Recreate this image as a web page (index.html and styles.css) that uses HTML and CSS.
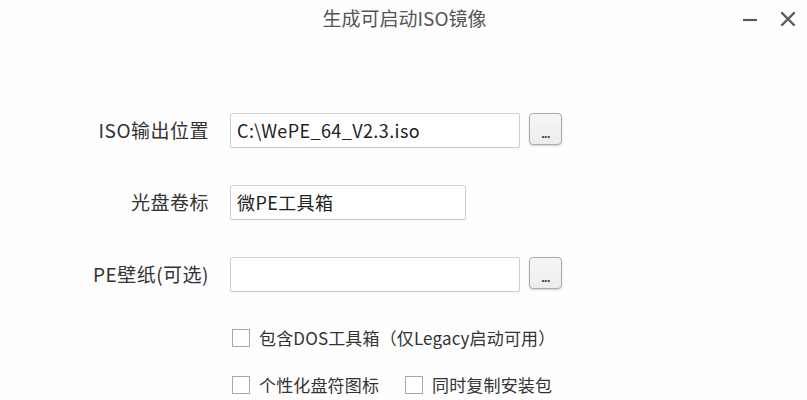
FILE: index.html
```html
<!DOCTYPE html>
<html lang="zh-CN">
<head>
<meta charset="utf-8">
<title>生成可启动ISO镜像</title>
<link rel="stylesheet" href="styles.css">
</head>
<body>
<div class="window">
  <header class="titlebar">
    <div class="title">生成可启动ISO镜像</div>
    <div class="controls">
      <svg class="ctl min" width="16" height="16" viewBox="0 0 16 16"><line x1="1" y1="9" x2="15" y2="9" stroke="#5a5a5a" stroke-width="2.2"/></svg>
      <svg class="ctl close" width="16" height="16" viewBox="0 0 16 16"><path d="M2 2 L14 14 M14 2 L2 14" stroke="#5a5a5a" stroke-width="2.4" stroke-linecap="round"/></svg>
    </div>
  </header>
  <main class="form">
    <div class="row">
      <label class="label">ISO输出位置</label>
      <div class="input wide">C:\WePE_64_V2.3.iso</div>
      <button class="browse">...</button>
    </div>
    <div class="row">
      <label class="label">光盘卷标</label>
      <div class="input narrow">微PE工具箱</div>
    </div>
    <div class="row">
      <label class="label">PE壁纸(可选)</label>
      <div class="input wide"></div>
      <button class="browse">...</button>
    </div>
    <div class="checks">
      <div class="check-row">
        <span class="check"><span class="box"></span><span class="ctext">包含DOS工具箱（仅Legacy启动可用）</span></span>
      </div>
      <div class="check-row">
        <span class="check"><span class="box"></span><span class="ctext">个性化盘符图标</span></span>
        <span class="check second"><span class="box"></span><span class="ctext">同时复制安装包</span></span>
      </div>
    </div>
  </main>
</div>
</body>
</html>
```
FILE: styles.css
```css
html, body {
  margin: 0;
  padding: 0;
  background: #ffffff;
}
body {
  font-family: "Noto Sans CJK SC", "Noto Sans", sans-serif;
  color: #333333;
  width: 807px;
  height: 400px;
  overflow: hidden;
}
.window {
  position: relative;
  width: 807px;
  height: 400px;
  background: #fefefe;
}
.titlebar {
  height: 38px;
  display: flex;
  align-items: center;
  justify-content: center;
}
.title {
  font-size: 19px;
  line-height: 22px;
  color: #555555;
  margin-top: -2px;
  margin-left: 2px;
}
.controls {
  position: absolute;
  top: 11px;
  right: 11px;
  display: flex;
  gap: 22px;
}
.ctl {
  display: block;
}
.form {
  display: flex;
  flex-direction: column;
  padding-top: 75px;
  padding-left: 89px;
}
.row {
  display: flex;
  align-items: center;
  height: 34px;
  margin-bottom: 38px;
}
.label {
  width: 120px;
  margin-right: 21px;
  text-align: right;
  font-size: 19px;
  line-height: 22px;
  letter-spacing: 0.5px;
  color: #333333;
  white-space: nowrap;
}
.input {
  box-sizing: border-box;
  height: 35px;
  border: 1px solid #cfcfcf;
  border-radius: 2px;
  background: #ffffff;
  box-shadow: 0 1px 1px rgba(0,0,0,0.06);
  padding-left: 6px;
  font-size: 18px;
  line-height: 32px;
  letter-spacing: 0.4px;
  color: #222222;
  white-space: nowrap;
}
.wide { width: 290px; }
.narrow { width: 236px; }
.browse {
  box-sizing: border-box;
  width: 33px;
  height: 32px;
  margin-left: 9px;
  margin-top: -2px;
  border: 1px solid #a9a9a9;
  border-radius: 4px;
  background: linear-gradient(#f6f6f6, #ececec);
  box-shadow: 0 1px 2px rgba(0,0,0,0.18);
  font-family: "Liberation Sans", sans-serif;
  font-weight: bold;
  font-size: 12px;
  color: #333333;
  padding: 10px 0 0 0;
  line-height: 12px;
  letter-spacing: -0.5px;
}
.checks {
  display: flex;
  flex-direction: column;
  margin-top: -1px;
  padding-left: 143px;
  gap: 27px;
}
.check-row {
  display: flex;
  align-items: center;
  height: 20px;
}
.check {
  display: flex;
  align-items: center;
}
.second {
  margin-left: 26px;
}
.box {
  box-sizing: border-box;
  width: 18px;
  height: 18px;
  border: 1px solid #a8a8a8;
  background: #ffffff;
  margin-right: 9px;
}
.ctext {
  font-size: 17px;
  line-height: 20px;
  letter-spacing: 0.15px;
  color: #333333;
  white-space: nowrap;
}
```
